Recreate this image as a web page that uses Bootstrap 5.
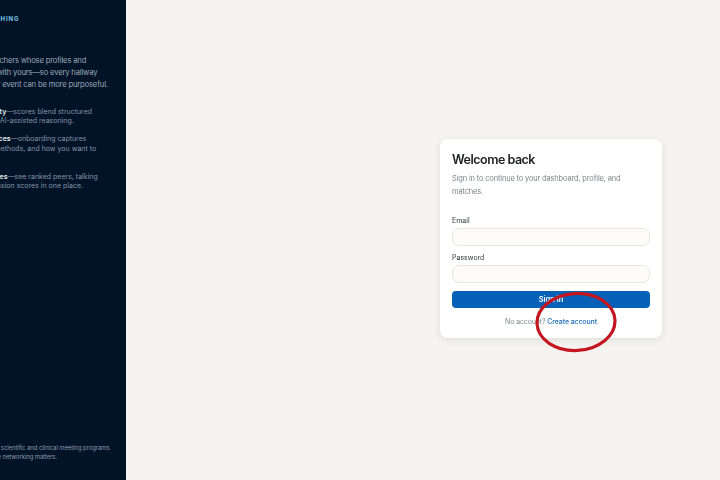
<!DOCTYPE html>
<html lang="en"><head><meta charset="utf-8"><title>Sign in</title>
<link href="https://cdn.jsdelivr.net/npm/bootstrap@5.3.0/dist/css/bootstrap.min.css" rel="stylesheet">
<style>
html,body{height:480px;overflow:hidden}
body{font-family:Inter,"Liberation Sans",sans-serif;background:#f6f4f1;color:#1d1f22}
.shell{height:480px;filter:blur(.35px)}
.side-panel{width:126px;background:#011327;overflow:hidden;flex:none}
.side-inner{width:300px;flex:none;height:480px;padding:14px 0 18px 174px}
.kicker{font-size:6px;font-weight:700;letter-spacing:.9px;color:#7cc9ea;line-height:9px;white-space:nowrap;margin:0 0 32px -48px}
.side-lead{font-size:7.7px;letter-spacing:-.2px;line-height:12.2px;color:#9aa6b5;margin:0 0 15px -70px;white-space:nowrap}
.side-item{font-size:7px;line-height:9.6px;color:#8493a6;margin:0 0 8.5px -54px;white-space:nowrap}
.side-item b{color:#e6ebf1;font-weight:600}
.side-foot{font-size:6px;letter-spacing:-.1px;line-height:9.6px;color:#8b98a9;white-space:nowrap;margin:0 0 0 -36px}
.main-area{padding:139px 58px 0 0}
.signin-card{width:222px;height:199px;background:#fff;border-radius:8px;box-shadow:0 2px 9px rgba(30,30,30,.1);padding:12px}
.signin-card h1{font-size:12.5px;font-weight:600;line-height:16px;margin:1px 0 5px;letter-spacing:-.5px}
.intro{font-size:7.5px;letter-spacing:-.17px;line-height:12.5px;color:#80858b;margin:0 0 17px}
.field-label{display:block;font-size:7px;line-height:10px;color:#33363a;padding-top:1px;margin-bottom:2px}
.field-box{display:block;width:100%;height:18px;background:#fcfbf8;border:1px solid #e8e6e1;border-radius:7px;margin-bottom:6px}
.field-last{margin-bottom:8px}
.go-btn{display:block;width:100%;height:17px;background:#0561b8;color:#fff;border:0;border-radius:4px;font-size:7.5px;font-weight:600;line-height:17px;padding:0}
.alt-line{font-size:7px;letter-spacing:-.12px;line-height:10px;color:#858a90;margin:9px 0 0}
.alt-line a{color:#1f6cb8;text-decoration:none;font-weight:500}
.red-ring{position:absolute;left:533px;top:291px;width:84px;height:62px;pointer-events:none}
</style></head>
<body>
<div class="shell d-flex position-relative">
  <aside class="side-panel d-flex justify-content-end">
    <div class="side-inner d-flex flex-column">
      <p class="kicker">EVENT MATCHING</p>
      <p class="side-lead">Connect with researchers whose profiles and<br>interests truly align with yours—so every hallway<br>conversation at your event can be more purposeful.</p>
      <p class="side-item"><b>Real compatibility</b>—scores blend structured<br>profile data and AI-assisted reasoning.</p>
      <p class="side-item"><b>Stated preferences</b>—onboarding captures<br>your subjects, methods, and how you want to<br>connect.</p>
      <p class="side-item"><b>Informed matches</b>—see ranked peers, talking<br>notes and dimension scores in one place.</p>
      <p class="side-foot mt-auto">Designed for scientific and clinical meeting programs<br>events where networking matters.</p>
    </div>
  </aside>
  <main class="main-area flex-grow-1 d-flex justify-content-end align-items-start">
    <div class="signin-card">
      <h1>Welcome back</h1>
      <p class="intro">Sign in to continue to your dashboard, profile, and matches.</p>
      <form>
        <label class="field-label" for="em">Email</label>
        <input class="field-box" id="em" type="email">
        <label class="field-label" for="pw">Password</label>
        <input class="field-box field-last" id="pw" type="password">
        <button class="go-btn" type="button">Sign in</button>
      </form>
      <p class="alt-line text-center">No account? <a href="#">Create account</a></p>
    </div>
  </main>
  <svg class="red-ring" viewBox="0 0 84 62"><ellipse cx="43" cy="31" rx="39" ry="28.5" fill="none" stroke="#c4161f" stroke-width="3.2" transform="rotate(-3 43 31)"/></svg>
</div>
<script src="https://cdn.jsdelivr.net/npm/bootstrap@5.3.0/dist/js/bootstrap.bundle.min.js"></script>
</body></html>
